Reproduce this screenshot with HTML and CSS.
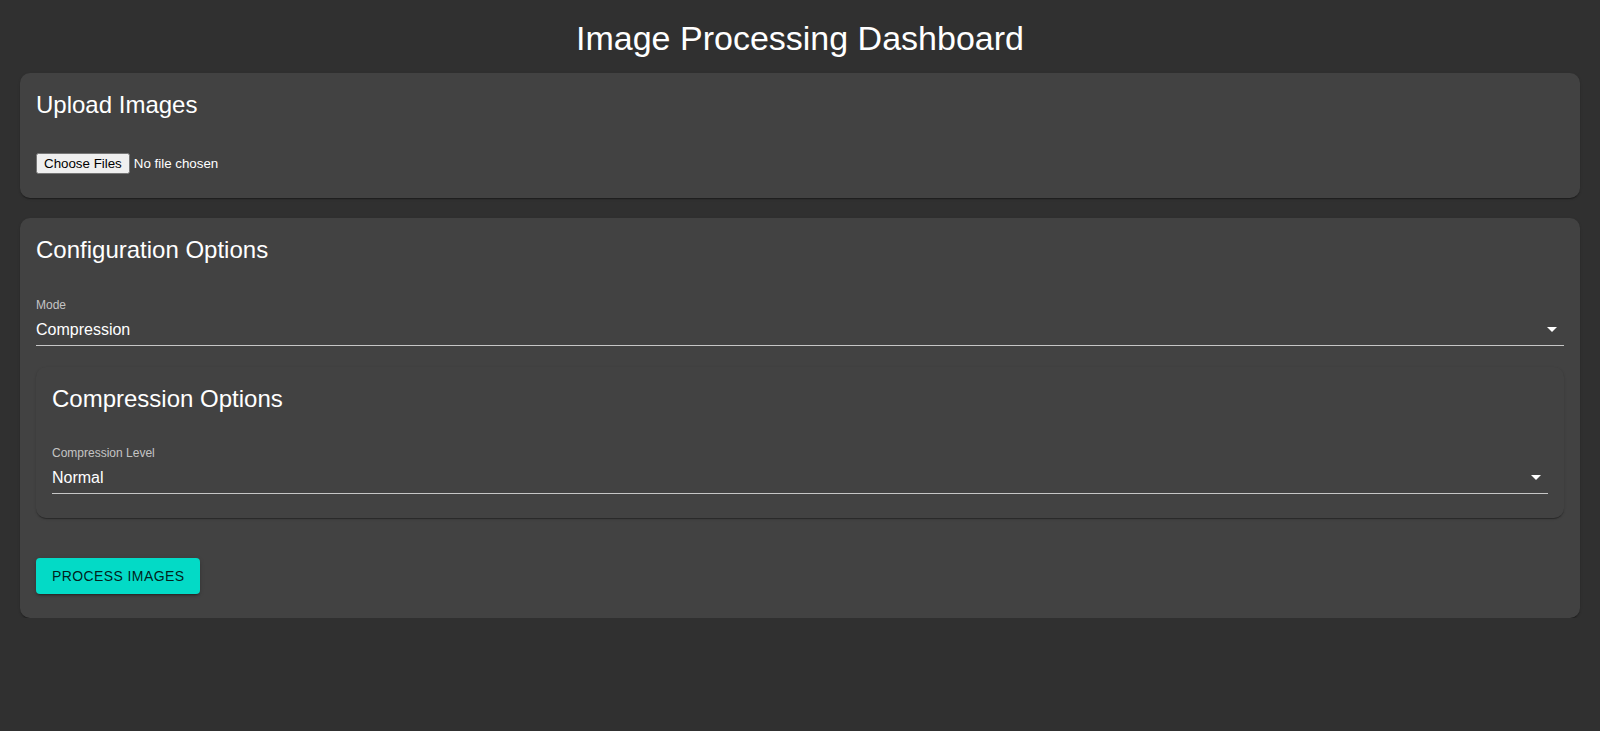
FILE: index.html
```html
<!DOCTYPE html>
<html lang="en">
<head>
<meta charset="utf-8">
<title>Image Processing Dashboard</title>
<link rel="stylesheet" href="styles.css">
</head>
<body>
<div class="page">
  <h1 class="title">Image Processing Dashboard</h1>

  <section class="card">
    <div class="card-content">
      <h2 class="card-title">Upload Images</h2>
      <input class="file-input" type="file" multiple>
    </div>
  </section>

  <section class="card card-config">
    <div class="card-content">
      <h2 class="card-title">Configuration Options</h2>
      <div class="field">
        <label class="field-label">Mode</label>
        <div class="select">
          <span class="select-value">Compression</span>
          <svg class="select-arrow" viewBox="0 0 24 24" width="24" height="24"><path d="M7 10l5 5 5-5z" fill="#fff"/></svg>
        </div>
      </div>

      <section class="card card-inner">
        <div class="card-content">
          <h2 class="card-title">Compression Options</h2>
          <div class="field">
            <label class="field-label">Compression Level</label>
            <div class="select">
              <span class="select-value">Normal</span>
              <svg class="select-arrow" viewBox="0 0 24 24" width="24" height="24"><path d="M7 10l5 5 5-5z" fill="#fff"/></svg>
            </div>
          </div>
        </div>
      </section>

      <button class="btn" type="button">Process Images</button>
    </div>
  </section>
</div>
</body>
</html>
```

FILE: styles.css
```css
html, body {
  margin: 0;
  padding: 0;
}
body {
  background: #303030;
  color: #fff;
  font-family: "Liberation Sans", Arial, sans-serif;
}
.page {
  padding: 0 20px;
  display: flex;
  flex-direction: column;
}
.title {
  margin: 17px 0 14px;
  font-size: 34px;
  font-weight: 400;
  line-height: 42px;
  text-align: center;
}
.card {
  background: #424242;
  border-radius: 10px;
  box-shadow: 0 2px 1px -1px rgba(0,0,0,0.2), 0 1px 1px 0 rgba(0,0,0,0.14), 0 1px 3px 0 rgba(0,0,0,0.12);
}
.card + .card {
  margin-top: 20px;
}
.card-content {
  padding: 16px 16px 24px;
  display: flex;
  flex-direction: column;
  align-items: stretch;
}
.card-title {
  margin: 0;
  font-size: 24px;
  font-weight: 400;
  line-height: 32px;
}
.file-input {
  display: block;
  margin-top: 32px;
  font-family: "Liberation Sans", Arial, sans-serif;
  font-size: 13.333px;
  color: #fff;
  align-self: flex-start;
}
.field {
  margin-top: 32px;
  display: flex;
  flex-direction: column;
}
.field-label {
  display: block;
  height: 16px;
  font-size: 12px;
  line-height: 14px;
  color: rgba(255,255,255,0.7);
}
.select {
  height: 32px;
  box-sizing: border-box;
  padding: 4px 0 5px;
  display: flex;
  align-items: center;
  justify-content: space-between;
  border-bottom: 1px solid rgba(255,255,255,0.7);
}
.select-value {
  font-size: 16px;
  line-height: 23px;
  color: #fff;
}
.select-arrow {
  display: block;
  flex: none;
}
.card-inner {
  margin-top: 21px;
  box-shadow: 0 2px 1px -1px rgba(0,0,0,0.2), 0 1px 1px 0 rgba(0,0,0,0.14), 0 1px 3px 0 rgba(0,0,0,0.12);
}
.card-inner .field {
  margin-top: 31px;
}
.btn {
  align-self: flex-start;
  margin-top: 40px;
  height: 36px;
  padding: 0 16px;
  border: none;
  border-radius: 4px;
  background: #03dac6;
  color: rgba(0,0,0,0.87);
  font-family: "Liberation Sans", Arial, sans-serif;
  font-size: 14px;
  font-weight: 500;
  letter-spacing: 0.4px;
  text-transform: uppercase;
  box-shadow: 0 3px 1px -2px rgba(0,0,0,0.2), 0 2px 2px 0 rgba(0,0,0,0.14), 0 1px 5px 0 rgba(0,0,0,0.12);
  cursor: pointer;
}
```
